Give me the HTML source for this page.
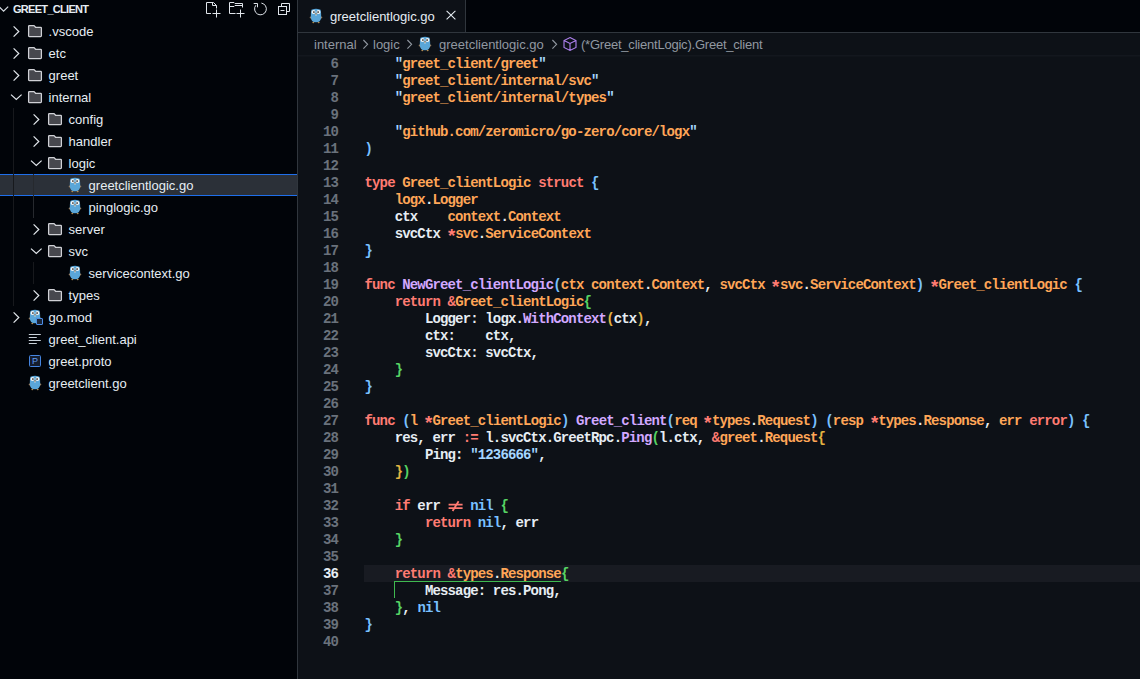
<!DOCTYPE html>
<html><head><meta charset="utf-8"><style>
*{margin:0;padding:0;box-sizing:content-box}
html,body{width:1140px;height:679px;overflow:hidden;background:#010409}
body{position:relative;font-family:"Liberation Sans",sans-serif}
.ic{position:absolute;overflow:visible}
#side{position:absolute;left:0;top:0;width:297px;height:679px;background:#010409;border-right:1px solid #30363d}
.hdr{position:absolute;letter-spacing:-0.7px;font:bold 11px/19px "Liberation Sans",sans-serif;color:#e6edf3;white-space:nowrap}
.row{position:absolute;left:0;width:297px;height:22px}
.row.sel{background:#2b3038;border-top:1px solid #1f6feb;border-bottom:1px solid #1f6feb;height:20px}
.lbl{position:absolute;font:13px/22px "Liberation Sans",sans-serif;color:#e6edf3;white-space:nowrap}
.guide{position:absolute;width:1px;background:#26292e}
#tabs{position:absolute;left:298px;top:0;width:842px;height:32px;background:#010409;border-bottom:1px solid #30363d}
#tab{position:absolute;left:0;top:0;width:167px;height:32px;background:#0d1117;border-right:1px solid #30363d}
#crumbs{position:absolute;left:298px;top:33px;width:842px;height:22px;background:#0d1117}
.cr{position:absolute;font:13px/22px "Liberation Sans",sans-serif;color:#9198a1;white-space:nowrap;top:1px}
#code{position:absolute;left:298px;top:55px;width:842px;height:624px;background:#0d1117}
#code > div{}
.ln{position:absolute;left:0;width:40px;text-align:right;letter-spacing:-0.851px;font:bold 14px/17px "Liberation Mono",monospace;color:#6a727c}
.ln.act{color:#e6edf3;font-weight:bold}
.ne{display:inline-block;vertical-align:top}
.ast{display:inline-block;transform:translate(-0.8px,2.6px) scale(1.35)}
.cl{position:absolute;left:66.5px;font:bold 14px/17px "Liberation Mono",monospace;letter-spacing:-0.851px;white-space:pre}
</style></head>
<body>
<div id="side">
<svg class="ic" style="left:0;top:0" width="12" height="16" viewBox="0 0 12 16"><path d="M-1 6.6 L3.6 11.2 L8.2 6.6" fill="none" stroke="#d5dbe1" stroke-width="1.2"/></svg>
<div class="hdr" style="left:13px;top:0px">GREET_CLIENT</div>
<svg class="ic" style="left:200px;top:0" width="100" height="20" viewBox="0 0 100 20" fill="none" stroke="#dfe4ea" stroke-width="1"><path d="M11 13.5 H6.5 V2.5 H13.5 L16.5 5.5 V8.5"/><path d="M12.5 2.5 V5.5 H16.5"/><path d="M12.5 13.5 H20.5 M16.5 9.5 V17.5"/><path d="M35.5 13.5 H29.5 V2.5 H34 L35 3.5 H42.5 V7.5"/><path d="M29.5 6.5 H34 L35 5.5 H42.5"/><path d="M36.5 13.5 H44.5 M40.5 9.5 V17.5"/><path d="M61.4 3.1 A5.9 5.9 0 1 1 55.9 5.2"/><path d="M53.7 3.5 H57.5 V7.3"/><path d="M81.5 6.5 V3.5 H89.5 V11.5 H86.5"/><rect x="78.5" y="6.5" width="8" height="8"/><path d="M80.5 10.5 H84.5"/></svg>
<div class="row" style="top:20px"></div>
<svg class="ic" style="left:12px;top:25px" width="10" height="14" viewBox="0 0 10 14"><path d="M1.6 1.4 L6.8 6.5 L1.6 11.6" fill="none" stroke="#e2e7ec" stroke-width="1.2"/></svg>
<svg class="ic" style="left:27px;top:24px" width="16" height="14" viewBox="0 0 16 14"><path d="M2.6 1.6 H7 L8.6 3.3 H13.6 Q14.4 3.3 14.4 4.1 V11.8 Q14.4 12.6 13.6 12.6 H2.4 Q1.6 12.6 1.6 11.8 V2.4 Q1.6 1.6 2.4 1.6 Z" fill="#47484e" stroke="#d0d1d6" stroke-width="1.25"/></svg>
<div class="lbl" style="left:48.6px;top:21px">.vscode</div>
<div class="row" style="top:42px"></div>
<svg class="ic" style="left:12px;top:47px" width="10" height="14" viewBox="0 0 10 14"><path d="M1.6 1.4 L6.8 6.5 L1.6 11.6" fill="none" stroke="#e2e7ec" stroke-width="1.2"/></svg>
<svg class="ic" style="left:27px;top:46px" width="16" height="14" viewBox="0 0 16 14"><path d="M2.6 1.6 H7 L8.6 3.3 H13.6 Q14.4 3.3 14.4 4.1 V11.8 Q14.4 12.6 13.6 12.6 H2.4 Q1.6 12.6 1.6 11.8 V2.4 Q1.6 1.6 2.4 1.6 Z" fill="#47484e" stroke="#d0d1d6" stroke-width="1.25"/></svg>
<div class="lbl" style="left:48.6px;top:43px">etc</div>
<div class="row" style="top:64px"></div>
<svg class="ic" style="left:12px;top:69px" width="10" height="14" viewBox="0 0 10 14"><path d="M1.6 1.4 L6.8 6.5 L1.6 11.6" fill="none" stroke="#e2e7ec" stroke-width="1.2"/></svg>
<svg class="ic" style="left:27px;top:68px" width="16" height="14" viewBox="0 0 16 14"><path d="M2.6 1.6 H7 L8.6 3.3 H13.6 Q14.4 3.3 14.4 4.1 V11.8 Q14.4 12.6 13.6 12.6 H2.4 Q1.6 12.6 1.6 11.8 V2.4 Q1.6 1.6 2.4 1.6 Z" fill="#47484e" stroke="#d0d1d6" stroke-width="1.25"/></svg>
<div class="lbl" style="left:48.6px;top:65px">greet</div>
<div class="row" style="top:86px"></div>
<svg class="ic" style="left:9.7px;top:93.2px" width="14" height="10" viewBox="0 0 14 10"><path d="M1 1.6 L6.3 6.5 L11.6 1.6" fill="none" stroke="#e2e7ec" stroke-width="1.2"/></svg>
<svg class="ic" style="left:27px;top:90px" width="16" height="14" viewBox="0 0 16 14"><path d="M2.6 1.6 H7 L8.6 3.3 H13.6 Q14.4 3.3 14.4 4.1 V11.8 Q14.4 12.6 13.6 12.6 H2.4 Q1.6 12.6 1.6 11.8 V2.4 Q1.6 1.6 2.4 1.6 Z" fill="#47484e" stroke="#d0d1d6" stroke-width="1.25"/></svg>
<div class="lbl" style="left:48.6px;top:87px">internal</div>
<div class="row" style="top:108px"></div>
<svg class="ic" style="left:32px;top:113px" width="10" height="14" viewBox="0 0 10 14"><path d="M1.6 1.4 L6.8 6.5 L1.6 11.6" fill="none" stroke="#e2e7ec" stroke-width="1.2"/></svg>
<svg class="ic" style="left:47px;top:112px" width="16" height="14" viewBox="0 0 16 14"><path d="M2.6 1.6 H7 L8.6 3.3 H13.6 Q14.4 3.3 14.4 4.1 V11.8 Q14.4 12.6 13.6 12.6 H2.4 Q1.6 12.6 1.6 11.8 V2.4 Q1.6 1.6 2.4 1.6 Z" fill="#47484e" stroke="#d0d1d6" stroke-width="1.25"/></svg>
<div class="lbl" style="left:68.6px;top:109px">config</div>
<div class="row" style="top:130px"></div>
<svg class="ic" style="left:32px;top:135px" width="10" height="14" viewBox="0 0 10 14"><path d="M1.6 1.4 L6.8 6.5 L1.6 11.6" fill="none" stroke="#e2e7ec" stroke-width="1.2"/></svg>
<svg class="ic" style="left:47px;top:134px" width="16" height="14" viewBox="0 0 16 14"><path d="M2.6 1.6 H7 L8.6 3.3 H13.6 Q14.4 3.3 14.4 4.1 V11.8 Q14.4 12.6 13.6 12.6 H2.4 Q1.6 12.6 1.6 11.8 V2.4 Q1.6 1.6 2.4 1.6 Z" fill="#47484e" stroke="#d0d1d6" stroke-width="1.25"/></svg>
<div class="lbl" style="left:68.6px;top:131px">handler</div>
<div class="row" style="top:152px"></div>
<svg class="ic" style="left:29.7px;top:159.2px" width="14" height="10" viewBox="0 0 14 10"><path d="M1 1.6 L6.3 6.5 L11.6 1.6" fill="none" stroke="#e2e7ec" stroke-width="1.2"/></svg>
<svg class="ic" style="left:47px;top:156px" width="16" height="14" viewBox="0 0 16 14"><path d="M2.6 1.6 H7 L8.6 3.3 H13.6 Q14.4 3.3 14.4 4.1 V11.8 Q14.4 12.6 13.6 12.6 H2.4 Q1.6 12.6 1.6 11.8 V2.4 Q1.6 1.6 2.4 1.6 Z" fill="#47484e" stroke="#d0d1d6" stroke-width="1.25"/></svg>
<div class="lbl" style="left:68.6px;top:153px">logic</div>
<div class="row sel" style="top:174px"></div>
<svg class="ic" style="left:68px;top:177px" width="14" height="16" viewBox="0 0 14 16"><ellipse cx="1.9" cy="9.6" rx="1.2" ry="1" fill="#9a7a5a"/><ellipse cx="12.1" cy="9.6" rx="1.2" ry="1" fill="#9a7a5a"/><ellipse cx="4.3" cy="14.5" rx="1" ry="0.8" fill="#b08a50"/><ellipse cx="9.7" cy="14.5" rx="1" ry="0.8" fill="#b08a50"/><path d="M2.3 2.6 Q2.2 1.3 3.3 1.4 Q5 0.7 7 0.7 Q9 0.7 10.7 1.4 Q11.8 1.3 11.7 2.6 Q12.3 5 12.2 9 Q12.2 14.3 7 14.3 Q1.8 14.3 1.8 9 Q1.7 5 2.3 2.6 Z" fill="#5aa6d8"/><circle cx="4.5" cy="4" r="1.95" fill="#f6f6f6"/><circle cx="9.5" cy="4" r="1.95" fill="#f6f6f6"/><circle cx="4.9" cy="4" r="0.85" fill="#1a1a1a"/><circle cx="9.1" cy="4" r="0.85" fill="#1a1a1a"/><ellipse cx="7" cy="6" rx="1.1" ry="0.65" fill="#a8845e"/><rect x="6.4" y="6.5" width="1.2" height="1" fill="#eaeaea"/></svg>
<div class="lbl" style="left:88.6px;top:175px">greetclientlogic.go</div>
<div class="row" style="top:196px"></div>
<svg class="ic" style="left:68px;top:199px" width="14" height="16" viewBox="0 0 14 16"><ellipse cx="1.9" cy="9.6" rx="1.2" ry="1" fill="#9a7a5a"/><ellipse cx="12.1" cy="9.6" rx="1.2" ry="1" fill="#9a7a5a"/><ellipse cx="4.3" cy="14.5" rx="1" ry="0.8" fill="#b08a50"/><ellipse cx="9.7" cy="14.5" rx="1" ry="0.8" fill="#b08a50"/><path d="M2.3 2.6 Q2.2 1.3 3.3 1.4 Q5 0.7 7 0.7 Q9 0.7 10.7 1.4 Q11.8 1.3 11.7 2.6 Q12.3 5 12.2 9 Q12.2 14.3 7 14.3 Q1.8 14.3 1.8 9 Q1.7 5 2.3 2.6 Z" fill="#5aa6d8"/><circle cx="4.5" cy="4" r="1.95" fill="#f6f6f6"/><circle cx="9.5" cy="4" r="1.95" fill="#f6f6f6"/><circle cx="4.9" cy="4" r="0.85" fill="#1a1a1a"/><circle cx="9.1" cy="4" r="0.85" fill="#1a1a1a"/><ellipse cx="7" cy="6" rx="1.1" ry="0.65" fill="#a8845e"/><rect x="6.4" y="6.5" width="1.2" height="1" fill="#eaeaea"/></svg>
<div class="lbl" style="left:88.6px;top:197px">pinglogic.go</div>
<div class="row" style="top:218px"></div>
<svg class="ic" style="left:32px;top:223px" width="10" height="14" viewBox="0 0 10 14"><path d="M1.6 1.4 L6.8 6.5 L1.6 11.6" fill="none" stroke="#e2e7ec" stroke-width="1.2"/></svg>
<svg class="ic" style="left:47px;top:222px" width="16" height="14" viewBox="0 0 16 14"><path d="M2.6 1.6 H7 L8.6 3.3 H13.6 Q14.4 3.3 14.4 4.1 V11.8 Q14.4 12.6 13.6 12.6 H2.4 Q1.6 12.6 1.6 11.8 V2.4 Q1.6 1.6 2.4 1.6 Z" fill="#47484e" stroke="#d0d1d6" stroke-width="1.25"/></svg>
<div class="lbl" style="left:68.6px;top:219px">server</div>
<div class="row" style="top:240px"></div>
<svg class="ic" style="left:29.7px;top:247.2px" width="14" height="10" viewBox="0 0 14 10"><path d="M1 1.6 L6.3 6.5 L11.6 1.6" fill="none" stroke="#e2e7ec" stroke-width="1.2"/></svg>
<svg class="ic" style="left:47px;top:244px" width="16" height="14" viewBox="0 0 16 14"><path d="M2.6 1.6 H7 L8.6 3.3 H13.6 Q14.4 3.3 14.4 4.1 V11.8 Q14.4 12.6 13.6 12.6 H2.4 Q1.6 12.6 1.6 11.8 V2.4 Q1.6 1.6 2.4 1.6 Z" fill="#47484e" stroke="#d0d1d6" stroke-width="1.25"/></svg>
<div class="lbl" style="left:68.6px;top:241px">svc</div>
<div class="row" style="top:262px"></div>
<svg class="ic" style="left:68px;top:265px" width="14" height="16" viewBox="0 0 14 16"><ellipse cx="1.9" cy="9.6" rx="1.2" ry="1" fill="#9a7a5a"/><ellipse cx="12.1" cy="9.6" rx="1.2" ry="1" fill="#9a7a5a"/><ellipse cx="4.3" cy="14.5" rx="1" ry="0.8" fill="#b08a50"/><ellipse cx="9.7" cy="14.5" rx="1" ry="0.8" fill="#b08a50"/><path d="M2.3 2.6 Q2.2 1.3 3.3 1.4 Q5 0.7 7 0.7 Q9 0.7 10.7 1.4 Q11.8 1.3 11.7 2.6 Q12.3 5 12.2 9 Q12.2 14.3 7 14.3 Q1.8 14.3 1.8 9 Q1.7 5 2.3 2.6 Z" fill="#5aa6d8"/><circle cx="4.5" cy="4" r="1.95" fill="#f6f6f6"/><circle cx="9.5" cy="4" r="1.95" fill="#f6f6f6"/><circle cx="4.9" cy="4" r="0.85" fill="#1a1a1a"/><circle cx="9.1" cy="4" r="0.85" fill="#1a1a1a"/><ellipse cx="7" cy="6" rx="1.1" ry="0.65" fill="#a8845e"/><rect x="6.4" y="6.5" width="1.2" height="1" fill="#eaeaea"/></svg>
<div class="lbl" style="left:88.6px;top:263px">servicecontext.go</div>
<div class="row" style="top:284px"></div>
<svg class="ic" style="left:32px;top:289px" width="10" height="14" viewBox="0 0 10 14"><path d="M1.6 1.4 L6.8 6.5 L1.6 11.6" fill="none" stroke="#e2e7ec" stroke-width="1.2"/></svg>
<svg class="ic" style="left:47px;top:288px" width="16" height="14" viewBox="0 0 16 14"><path d="M2.6 1.6 H7 L8.6 3.3 H13.6 Q14.4 3.3 14.4 4.1 V11.8 Q14.4 12.6 13.6 12.6 H2.4 Q1.6 12.6 1.6 11.8 V2.4 Q1.6 1.6 2.4 1.6 Z" fill="#47484e" stroke="#d0d1d6" stroke-width="1.25"/></svg>
<div class="lbl" style="left:68.6px;top:285px">types</div>
<div class="row" style="top:306px"></div>
<svg class="ic" style="left:12px;top:311px" width="10" height="14" viewBox="0 0 10 14"><path d="M1.6 1.4 L6.8 6.5 L1.6 11.6" fill="none" stroke="#e2e7ec" stroke-width="1.2"/></svg>
<svg class="ic" style="left:28px;top:309px" width="14" height="16" viewBox="0 0 14 16"><ellipse cx="1.9" cy="9.6" rx="1.2" ry="1" fill="#9a7a5a"/><ellipse cx="12.1" cy="9.6" rx="1.2" ry="1" fill="#9a7a5a"/><ellipse cx="4.3" cy="14.5" rx="1" ry="0.8" fill="#b08a50"/><ellipse cx="9.7" cy="14.5" rx="1" ry="0.8" fill="#b08a50"/><path d="M2.3 2.6 Q2.2 1.3 3.3 1.4 Q5 0.7 7 0.7 Q9 0.7 10.7 1.4 Q11.8 1.3 11.7 2.6 Q12.3 5 12.2 9 Q12.2 14.3 7 14.3 Q1.8 14.3 1.8 9 Q1.7 5 2.3 2.6 Z" fill="#5aa6d8"/><circle cx="4.5" cy="4" r="1.95" fill="#f6f6f6"/><circle cx="9.5" cy="4" r="1.95" fill="#f6f6f6"/><circle cx="4.9" cy="4" r="0.85" fill="#1a1a1a"/><circle cx="9.1" cy="4" r="0.85" fill="#1a1a1a"/><ellipse cx="7" cy="6" rx="1.1" ry="0.65" fill="#a8845e"/><rect x="6.4" y="6.5" width="1.2" height="1" fill="#eaeaea"/></svg>
<div style="position:absolute;left:35.6px;top:318.2px;width:5px;height:5px;border:1.2px solid #4c8de6;background:#1a2538;border-radius:1px"></div>
<div class="lbl" style="left:48.6px;top:307px">go.mod</div>
<div class="row" style="top:328px"></div>
<svg class="ic" style="left:28px;top:331px" width="14" height="16" viewBox="0 0 14 16" stroke="#c9d1d9" stroke-width="1"><path d="M0.8 11.5 H12.8 M0.8 14.5 H8.8 M0.8 17.5 H12.8 M0.8 20.5 H8.8" transform="translate(0,-8)"/></svg>
<div class="lbl" style="left:48.6px;top:329px">greet_client.api</div>
<div class="row" style="top:350px"></div>
<div style="position:absolute;left:29.2px;top:355px;width:9.5px;height:9.5px;border:1.2px solid #4585e0;border-radius:1.5px;background:#151d2e;color:#5e9cf2;font:9px/10px 'Liberation Sans',sans-serif;text-align:center">P</div>
<div class="lbl" style="left:48.6px;top:351px">greet.proto</div>
<div class="row" style="top:372px"></div>
<svg class="ic" style="left:28px;top:375px" width="14" height="16" viewBox="0 0 14 16"><ellipse cx="1.9" cy="9.6" rx="1.2" ry="1" fill="#9a7a5a"/><ellipse cx="12.1" cy="9.6" rx="1.2" ry="1" fill="#9a7a5a"/><ellipse cx="4.3" cy="14.5" rx="1" ry="0.8" fill="#b08a50"/><ellipse cx="9.7" cy="14.5" rx="1" ry="0.8" fill="#b08a50"/><path d="M2.3 2.6 Q2.2 1.3 3.3 1.4 Q5 0.7 7 0.7 Q9 0.7 10.7 1.4 Q11.8 1.3 11.7 2.6 Q12.3 5 12.2 9 Q12.2 14.3 7 14.3 Q1.8 14.3 1.8 9 Q1.7 5 2.3 2.6 Z" fill="#5aa6d8"/><circle cx="4.5" cy="4" r="1.95" fill="#f6f6f6"/><circle cx="9.5" cy="4" r="1.95" fill="#f6f6f6"/><circle cx="4.9" cy="4" r="0.85" fill="#1a1a1a"/><circle cx="9.1" cy="4" r="0.85" fill="#1a1a1a"/><ellipse cx="7" cy="6" rx="1.1" ry="0.65" fill="#a8845e"/><rect x="6.4" y="6.5" width="1.2" height="1" fill="#eaeaea"/></svg>
<div class="lbl" style="left:48.6px;top:373px">greetclient.go</div>
<div class="guide" style="left:13px;top:108px;height:198px;background:#17191d"></div>
<div class="guide" style="left:33px;top:174px;height:44px"></div>
<div class="guide" style="left:33px;top:262px;height:22px;background:#17191d"></div>
</div>
<div id="tabs"><div id="tab">
<svg class="ic" style="left:11px;top:8px" width="14" height="16" viewBox="0 0 14 16"><ellipse cx="1.9" cy="9.6" rx="1.2" ry="1" fill="#9a7a5a"/><ellipse cx="12.1" cy="9.6" rx="1.2" ry="1" fill="#9a7a5a"/><ellipse cx="4.3" cy="14.5" rx="1" ry="0.8" fill="#b08a50"/><ellipse cx="9.7" cy="14.5" rx="1" ry="0.8" fill="#b08a50"/><path d="M2.3 2.6 Q2.2 1.3 3.3 1.4 Q5 0.7 7 0.7 Q9 0.7 10.7 1.4 Q11.8 1.3 11.7 2.6 Q12.3 5 12.2 9 Q12.2 14.3 7 14.3 Q1.8 14.3 1.8 9 Q1.7 5 2.3 2.6 Z" fill="#5aa6d8"/><circle cx="4.5" cy="4" r="1.95" fill="#f6f6f6"/><circle cx="9.5" cy="4" r="1.95" fill="#f6f6f6"/><circle cx="4.9" cy="4" r="0.85" fill="#1a1a1a"/><circle cx="9.1" cy="4" r="0.85" fill="#1a1a1a"/><ellipse cx="7" cy="6" rx="1.1" ry="0.65" fill="#a8845e"/><rect x="6.4" y="6.5" width="1.2" height="1" fill="#eaeaea"/></svg>
<div style="position:absolute;left:32px;top:1px;font:13px/32px 'Liberation Sans',sans-serif;color:#e6edf3;white-space:nowrap">greetclientlogic.go</div>
<svg class="ic" style="left:147px;top:9px" width="12" height="12" viewBox="0 0 12 12" stroke="#e6edf3" stroke-width="1.1"><path d="M1.6 1.9 L10.4 10.3 M10.4 1.9 L1.6 10.3"/></svg>
</div></div>
<div id="crumbs">
<div class="cr" style="left:16px">internal</div>
<svg class="ic" style="left:64px;top:0" width="10" height="22" viewBox="0 0 10 22"><path d="M1.4 7 L5.6 11.3 L1.4 15.6" fill="none" stroke="#9198a1" stroke-width="1.1"/></svg>
<div class="cr" style="left:75px">logic</div>
<svg class="ic" style="left:108px;top:0" width="10" height="22" viewBox="0 0 10 22"><path d="M1.4 7 L5.6 11.3 L1.4 15.6" fill="none" stroke="#9198a1" stroke-width="1.1"/></svg>
<svg class="ic" style="left:120px;top:3px" width="14" height="16" viewBox="0 0 14 16"><ellipse cx="1.9" cy="9.6" rx="1.2" ry="1" fill="#9a7a5a"/><ellipse cx="12.1" cy="9.6" rx="1.2" ry="1" fill="#9a7a5a"/><ellipse cx="4.3" cy="14.5" rx="1" ry="0.8" fill="#b08a50"/><ellipse cx="9.7" cy="14.5" rx="1" ry="0.8" fill="#b08a50"/><path d="M2.3 2.6 Q2.2 1.3 3.3 1.4 Q5 0.7 7 0.7 Q9 0.7 10.7 1.4 Q11.8 1.3 11.7 2.6 Q12.3 5 12.2 9 Q12.2 14.3 7 14.3 Q1.8 14.3 1.8 9 Q1.7 5 2.3 2.6 Z" fill="#5aa6d8"/><circle cx="4.5" cy="4" r="1.95" fill="#f6f6f6"/><circle cx="9.5" cy="4" r="1.95" fill="#f6f6f6"/><circle cx="4.9" cy="4" r="0.85" fill="#1a1a1a"/><circle cx="9.1" cy="4" r="0.85" fill="#1a1a1a"/><ellipse cx="7" cy="6" rx="1.1" ry="0.65" fill="#a8845e"/><rect x="6.4" y="6.5" width="1.2" height="1" fill="#eaeaea"/></svg>
<div class="cr" style="left:141px">greetclientlogic.go</div>
<svg class="ic" style="left:253px;top:0" width="10" height="22" viewBox="0 0 10 22"><path d="M1.4 7 L5.6 11.3 L1.4 15.6" fill="none" stroke="#9198a1" stroke-width="1.1"/></svg>
<svg class="ic" style="left:264px;top:3px" width="16" height="16" viewBox="0 0 16 16" fill="none" stroke="#b083f0" stroke-width="1.1"><path d="M8 1.5 L14 4.5 V11.5 L8 14.5 L2 11.5 V4.5 Z M2 4.5 L8 7.5 L14 4.5 M8 7.5 V14.5"/></svg>
<div class="cr" style="left:283px;letter-spacing:-0.22px">(*Greet_clientLogic).Greet_client</div>
</div>
<div id="code">
<div style="position:absolute;left:66px;top:510px;width:776px;height:17px;background:#181b22"></div>
<div style="position:absolute;left:96px;top:526px;width:167px;height:1px;background:#3fb950"></div>
<div style="position:absolute;left:96px;top:526px;width:1px;height:17px;background:#3fb950"></div>
<div class="ln" style="top:1px">6</div>
<div class="cl" style="top:1px"><span style="color:#e6edf3">    </span><span style="color:#a5d6ff">&quot;</span><span style="color:#ffa657">greet_client/greet</span><span style="color:#a5d6ff">&quot;</span></div>
<div class="ln" style="top:18px">7</div>
<div class="cl" style="top:18px"><span style="color:#e6edf3">    </span><span style="color:#a5d6ff">&quot;</span><span style="color:#ffa657">greet_client/internal/svc</span><span style="color:#a5d6ff">&quot;</span></div>
<div class="ln" style="top:35px">8</div>
<div class="cl" style="top:35px"><span style="color:#e6edf3">    </span><span style="color:#a5d6ff">&quot;</span><span style="color:#ffa657">greet_client/internal/types</span><span style="color:#a5d6ff">&quot;</span></div>
<div class="ln" style="top:52px">9</div>
<div class="cl" style="top:52px"></div>
<div class="ln" style="top:69px">10</div>
<div class="cl" style="top:69px"><span style="color:#e6edf3">    </span><span style="color:#a5d6ff">&quot;</span><span style="color:#ffa657">github.com/zeromicro/go-zero/core/logx</span><span style="color:#a5d6ff">&quot;</span></div>
<div class="ln" style="top:86px">11</div>
<div class="cl" style="top:86px"><span style="color:#79c0ff">)</span></div>
<div class="ln" style="top:103px">12</div>
<div class="cl" style="top:103px"></div>
<div class="ln" style="top:120px">13</div>
<div class="cl" style="top:120px"><span style="color:#ff7b72">type</span><span style="color:#e6edf3"> </span><span style="color:#ffa657">Greet_clientLogic</span><span style="color:#e6edf3"> </span><span style="color:#ff7b72">struct</span><span style="color:#e6edf3"> </span><span style="color:#79c0ff">{</span></div>
<div class="ln" style="top:137px">14</div>
<div class="cl" style="top:137px"><span style="color:#e6edf3">    </span><span style="color:#ffa657">logx</span><span style="color:#e6edf3">.</span><span style="color:#ffa657">Logger</span></div>
<div class="ln" style="top:154px">15</div>
<div class="cl" style="top:154px"><span style="color:#e6edf3">    ctx    </span><span style="color:#ffa657">context</span><span style="color:#e6edf3">.</span><span style="color:#ffa657">Context</span></div>
<div class="ln" style="top:171px">16</div>
<div class="cl" style="top:171px"><span style="color:#e6edf3">    svcCtx </span><span class="ast" style="color:#ff7b72">*</span><span style="color:#ffa657">svc</span><span style="color:#e6edf3">.</span><span style="color:#ffa657">ServiceContext</span></div>
<div class="ln" style="top:188px">17</div>
<div class="cl" style="top:188px"><span style="color:#79c0ff">}</span></div>
<div class="ln" style="top:205px">18</div>
<div class="cl" style="top:205px"></div>
<div class="ln" style="top:222px">19</div>
<div class="cl" style="top:222px"><span style="color:#ff7b72">func</span><span style="color:#e6edf3"> </span><span style="color:#d2a8ff">NewGreet_clientLogic</span><span style="color:#79c0ff">(</span><span style="color:#ffa657">ctx</span><span style="color:#e6edf3"> </span><span style="color:#ffa657">context</span><span style="color:#e6edf3">.</span><span style="color:#ffa657">Context</span><span style="color:#e6edf3">, </span><span style="color:#ffa657">svcCtx</span><span style="color:#e6edf3"> </span><span class="ast" style="color:#ff7b72">*</span><span style="color:#ffa657">svc</span><span style="color:#e6edf3">.</span><span style="color:#ffa657">ServiceContext</span><span style="color:#79c0ff">)</span><span style="color:#e6edf3"> </span><span class="ast" style="color:#ff7b72">*</span><span style="color:#ffa657">Greet_clientLogic</span><span style="color:#e6edf3"> </span><span style="color:#79c0ff">{</span></div>
<div class="ln" style="top:239px">20</div>
<div class="cl" style="top:239px"><span style="color:#e6edf3">    </span><span style="color:#ff7b72">return</span><span style="color:#e6edf3"> </span><span style="color:#ff7b72">&amp;</span><span style="color:#ffa657">Greet_clientLogic</span><span style="color:#56d364">{</span></div>
<div class="ln" style="top:256px">21</div>
<div class="cl" style="top:256px"><span style="color:#e6edf3">        Logger: logx.</span><span style="color:#d2a8ff">WithContext</span><span style="color:#e3b341">(</span><span style="color:#e6edf3">ctx</span><span style="color:#e3b341">)</span><span style="color:#e6edf3">,</span></div>
<div class="ln" style="top:273px">22</div>
<div class="cl" style="top:273px"><span style="color:#e6edf3">        ctx:    ctx,</span></div>
<div class="ln" style="top:290px">23</div>
<div class="cl" style="top:290px"><span style="color:#e6edf3">        svcCtx: svcCtx,</span></div>
<div class="ln" style="top:307px">24</div>
<div class="cl" style="top:307px"><span style="color:#e6edf3">    </span><span style="color:#56d364">}</span></div>
<div class="ln" style="top:324px">25</div>
<div class="cl" style="top:324px"><span style="color:#79c0ff">}</span></div>
<div class="ln" style="top:341px">26</div>
<div class="cl" style="top:341px"></div>
<div class="ln" style="top:358px">27</div>
<div class="cl" style="top:358px"><span style="color:#ff7b72">func</span><span style="color:#e6edf3"> </span><span style="color:#79c0ff">(</span><span style="color:#ffa657">l</span><span style="color:#e6edf3"> </span><span class="ast" style="color:#ff7b72">*</span><span style="color:#ffa657">Greet_clientLogic</span><span style="color:#79c0ff">)</span><span style="color:#e6edf3"> </span><span style="color:#d2a8ff">Greet_client</span><span style="color:#79c0ff">(</span><span style="color:#ffa657">req</span><span style="color:#e6edf3"> </span><span class="ast" style="color:#ff7b72">*</span><span style="color:#ffa657">types</span><span style="color:#e6edf3">.</span><span style="color:#ffa657">Request</span><span style="color:#79c0ff">)</span><span style="color:#e6edf3"> </span><span style="color:#79c0ff">(</span><span style="color:#ffa657">resp</span><span style="color:#e6edf3"> </span><span class="ast" style="color:#ff7b72">*</span><span style="color:#ffa657">types</span><span style="color:#e6edf3">.</span><span style="color:#ffa657">Response</span><span style="color:#e6edf3">, </span><span style="color:#ffa657">err</span><span style="color:#e6edf3"> </span><span style="color:#ff7b72">error</span><span style="color:#79c0ff">)</span><span style="color:#e6edf3"> </span><span style="color:#79c0ff">{</span></div>
<div class="ln" style="top:375px">28</div>
<div class="cl" style="top:375px"><span style="color:#e6edf3">    res, err </span><span style="color:#ff7b72">:=</span><span style="color:#e6edf3"> l.svcCtx.GreetRpc.</span><span style="color:#d2a8ff">Ping</span><span style="color:#56d364">(</span><span style="color:#e6edf3">l.ctx, </span><span style="color:#ff7b72">&amp;</span><span style="color:#ffa657">greet</span><span style="color:#e6edf3">.</span><span style="color:#ffa657">Request</span><span style="color:#e3b341">{</span></div>
<div class="ln" style="top:392px">29</div>
<div class="cl" style="top:392px"><span style="color:#e6edf3">        Ping: </span><span style="color:#a5d6ff">&quot;1236666&quot;</span><span style="color:#e6edf3">,</span></div>
<div class="ln" style="top:409px">30</div>
<div class="cl" style="top:409px"><span style="color:#e6edf3">    </span><span style="color:#e3b341">}</span><span style="color:#56d364">)</span></div>
<div class="ln" style="top:426px">31</div>
<div class="cl" style="top:426px"></div>
<div class="ln" style="top:443px">32</div>
<div class="cl" style="top:443px"><span style="color:#e6edf3">    </span><span style="color:#ff7b72">if</span><span style="color:#e6edf3"> err </span><svg class="ne" width="15.1" height="17" viewBox="0 0 15.1 17" fill="none" stroke="#ff7b72" stroke-width="1.8"><path d="M0.6 6.6 H14.6 M0.6 10.1 H14.6 M4.6 13 L10.6 3.2"/></svg><span style="color:#e6edf3"> </span><span style="color:#79c0ff">nil</span><span style="color:#e6edf3"> </span><span style="color:#56d364">{</span></div>
<div class="ln" style="top:460px">33</div>
<div class="cl" style="top:460px"><span style="color:#e6edf3">        </span><span style="color:#ff7b72">return</span><span style="color:#e6edf3"> </span><span style="color:#79c0ff">nil</span><span style="color:#e6edf3">, err</span></div>
<div class="ln" style="top:477px">34</div>
<div class="cl" style="top:477px"><span style="color:#e6edf3">    </span><span style="color:#56d364">}</span></div>
<div class="ln" style="top:494px">35</div>
<div class="cl" style="top:494px"></div>
<div class="ln act" style="top:511px">36</div>
<div class="cl" style="top:511px"><span style="color:#e6edf3">    </span><span style="color:#ff7b72">return</span><span style="color:#e6edf3"> </span><span style="color:#ff7b72">&amp;</span><span style="color:#ffa657">types</span><span style="color:#e6edf3">.</span><span style="color:#ffa657">Response</span><span style="color:#56d364">{</span></div>
<div class="ln" style="top:528px">37</div>
<div class="cl" style="top:528px"><span style="color:#e6edf3">        Message: res.Pong,</span></div>
<div class="ln" style="top:545px">38</div>
<div class="cl" style="top:545px"><span style="color:#e6edf3">    </span><span style="color:#56d364">}</span><span style="color:#e6edf3">, </span><span style="color:#79c0ff">nil</span></div>
<div class="ln" style="top:562px">39</div>
<div class="cl" style="top:562px"><span style="color:#79c0ff">}</span></div>
<div class="ln" style="top:579px">40</div>
<div class="cl" style="top:579px"></div>
</div>
<div style="position:absolute;left:298px;top:55px;width:842px;height:1px;background:#13171e"></div><div style="position:absolute;left:298px;top:56px;width:842px;height:1px;background:#10141a"></div>
</body></html>
